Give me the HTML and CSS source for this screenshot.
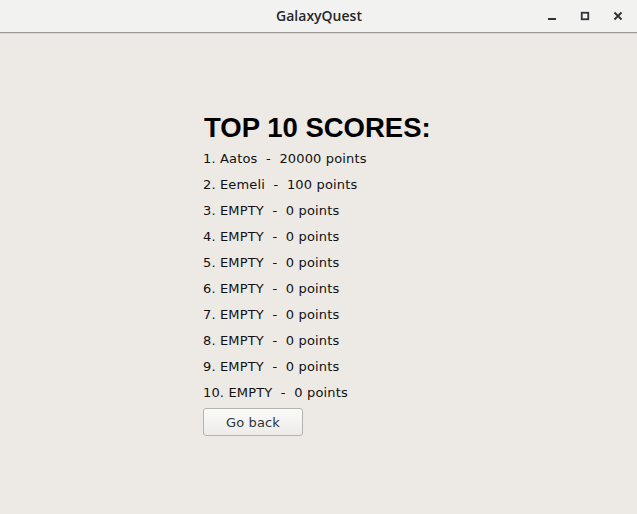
FILE: index.html
```html
<!DOCTYPE html>
<html>
<head>
<meta charset="utf-8">
<link rel="stylesheet" href="styles.css">
</head>
<body>
<div class="window">
  <header class="titlebar">
    <div class="title">GalaxyQuest</div>
    <div class="controls">
      <span class="ctl"><svg width="12" height="12" viewBox="0 0 12 12"><rect x="2" y="8" width="8" height="2" fill="#2e3436"/></svg></span>
      <span class="ctl"><svg width="12" height="12" viewBox="0 0 12 12"><rect x="2.75" y="2.75" width="6.5" height="6.5" fill="none" stroke="#2e3436" stroke-width="1.8"/></svg></span>
      <span class="ctl"><svg width="12" height="12" viewBox="0 0 12 12"><path d="M2.5 2.5 L9.5 9.5 M9.5 2.5 L2.5 9.5" stroke="#2e3436" stroke-width="1.9"/></svg></span>
    </div>
  </header>
  <main class="content">
    <div class="scores">
      <h1 class="heading">TOP 10 SCORES:</h1>
      <ol class="list">
        <li class="row">1. Aatos  -  20000 points</li>
        <li class="row">2. Eemeli  -  100 points</li>
        <li class="row">3. EMPTY  -  0 points</li>
        <li class="row">4. EMPTY  -  0 points</li>
        <li class="row">5. EMPTY  -  0 points</li>
        <li class="row">6. EMPTY  -  0 points</li>
        <li class="row">7. EMPTY  -  0 points</li>
        <li class="row">8. EMPTY  -  0 points</li>
        <li class="row">9. EMPTY  -  0 points</li>
        <li class="row">10. EMPTY  -  0 points</li>
      </ol>
      <button class="back">Go back</button>
    </div>
  </main>
</div>
</body>
</html>
```
FILE: styles.css
```css
html, body {
  margin: 0;
  padding: 0;
  width: 637px;
  height: 514px;
  overflow: hidden;
  background: #ede9e5;
}
.window {
  display: flex;
  flex-direction: column;
  height: 514px;
}
.titlebar {
  height: 32px;
  background: #f2f2f1;
  border-bottom: 1px solid #9b9b99;
  box-shadow: 0 1px 0 #d8d6d2;
  display: flex;
  align-items: center;
  justify-content: center;
  position: relative;
  flex: none;
}
.title {
  font-family: "Open Sans", "DejaVu Sans", sans-serif;
  font-size: 14px;
  font-weight: 600;
  color: #26292b;
  padding-left: 1px;
  padding-bottom: 2px;
}
.controls {
  position: absolute;
  right: 13px;
  top: 0;
  height: 32px;
  display: flex;
  align-items: center;
  gap: 21px;
}
.ctl {
  width: 12px;
  height: 12px;
  display: flex;
}
.content {
  flex: 1;
  display: flex;
  padding-left: 203px;
  padding-top: 78px;
}
.scores {
  display: flex;
  flex-direction: column;
  align-items: flex-start;
}
.heading {
  margin: 0 0 0 1px;
  font-family: "Liberation Sans", Arial, sans-serif;
  font-weight: bold;
  font-size: 27.5px;
  line-height: 33px;
  color: #000;
}
.list {
  list-style: none;
  margin: 2px 0 0 0;
  padding: 0;
}
.row {
  font-family: "DejaVu Sans", sans-serif;
  font-size: 13px;
  letter-spacing: 0.15px;
  line-height: 26px;
  height: 26px;
  white-space: pre;
  color: #111;
}
.back {
  margin-top: 2px;
  width: 100px;
  height: 28px;
  border: 1px solid #b6b2ad;
  border-radius: 3px;
  background: linear-gradient(#fbfbfa, #edebe9);
  font-family: "DejaVu Sans", sans-serif;
  font-size: 13px;
  letter-spacing: 0.15px;
  color: #2e3436;
  padding: 0;
}
```
